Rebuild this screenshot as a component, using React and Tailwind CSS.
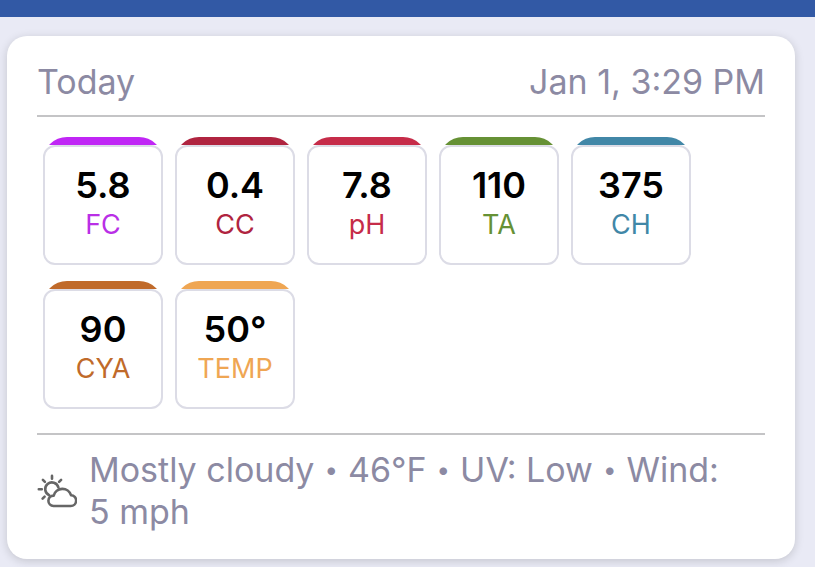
const READINGS = [
  { label: 'FC',   value: '5.8', bar: 'bg-[#c026f5]', text: 'text-[#b92fe6]' },
  { label: 'CC',   value: '0.4', bar: 'bg-[#b02440]', text: 'text-[#b02440]' },
  { label: 'pH',   value: '7.8', bar: 'bg-[#c62c49]', text: 'text-[#c62c49]' },
  { label: 'TA',   value: '110', bar: 'bg-[#669135]', text: 'text-[#669135]' },
  { label: 'CH',   value: '375', bar: 'bg-[#4187a7]', text: 'text-[#4187a7]' },
  { label: 'CYA',  value: '90',  bar: 'bg-[#c06a2a]', text: 'text-[#c06a2a]' },
  { label: 'TEMP', value: '50°', bar: 'bg-[#efa653]', text: 'text-[#efa653]' },
]

function CloudSunIcon() {
  return (
    <svg
      viewBox="0 0 40 34"
      className="w-10 h-[34px] shrink-0"
      fill="none"
      stroke="#666"
      strokeWidth="2.6"
      strokeLinecap="round"
      strokeLinejoin="round"
      aria-hidden="true"
    >
      <path d="M15 1.9v2.8M5.9 5.9l2 2M24.1 5.9l-2 2M1.8 15.2h3M5.6 24.6l2-2" />
      <path d="M12.2 21.2a6.7 6.7 0 1 1 9.2-7.8" />
      <path d="M16.5 32h17a5.4 5.4 0 0 0 .5-10.8a9 9 0 0 0-17.3.4a5.2 5.2 0 0 0-.2 10.4Z" />
    </svg>
  )
}

function Dot() {
  return <span className="text-2xl leading-10">•</span>
}

function ReadingTile({ label, value, bar, text }) {
  return (
    <div className="w-[120px]">
      {/* Coloured cap */}
      <div className="h-2 overflow-hidden">
        <div className={`h-6 rounded-t-3xl ${bar}`} />
      </div>
      <div className="h-[120px] pt-[18px] text-center bg-white border-2 border-[#dcdce6] rounded-xl">
        <p className="text-4xl leading-10 font-semibold text-black">{value}</p>
        <p className={`text-[27px] leading-10 ${text}`}>{label}</p>
      </div>
    </div>
  )
}

export default function App() {
  return (
    <div className="min-h-screen bg-[#e9eaf5] font-['Inter',sans-serif]">
      <header className="h-[17px] bg-[#3259a5]" />

      <main className="pt-[19px] pl-[7px] pr-5 pb-2">
        <section className="bg-white rounded-[20px] px-[30px] pt-6 pb-[26px] shadow-[0_2px_10px_rgba(0,0,0,0.16)]">

          {/* Date row */}
          <div className="flex justify-between pb-3 border-b-2 border-[#c4c4c6] text-[34px] leading-[43px] text-[#8c8aa3]">
            <h1>Today</h1>
            <time>Jan 1, 3:29 PM</time>
          </div>

          {/* Readings */}
          <div className="flex flex-wrap gap-x-3 gap-y-4 px-[6px] pt-5 pb-6">
            {READINGS.map((r) => (
              <ReadingTile key={r.label} {...r} />
            ))}
          </div>

          {/* Weather */}
          <div className="flex items-center gap-3 pt-[14px] border-t-2 border-[#c4c4c6] text-[34px] leading-[42px] text-[#8c8aa3]">
            <CloudSunIcon />
            <p className="flex flex-wrap items-center gap-x-[10px]">
              <span>Mostly cloudy</span>
              <Dot />
              <span>46°F</span>
              <Dot />
              <span>UV: Low</span>
              <Dot />
              <span>Wind:</span>
              <span>5 mph</span>
            </p>
          </div>

        </section>
      </main>
    </div>
  )
}
